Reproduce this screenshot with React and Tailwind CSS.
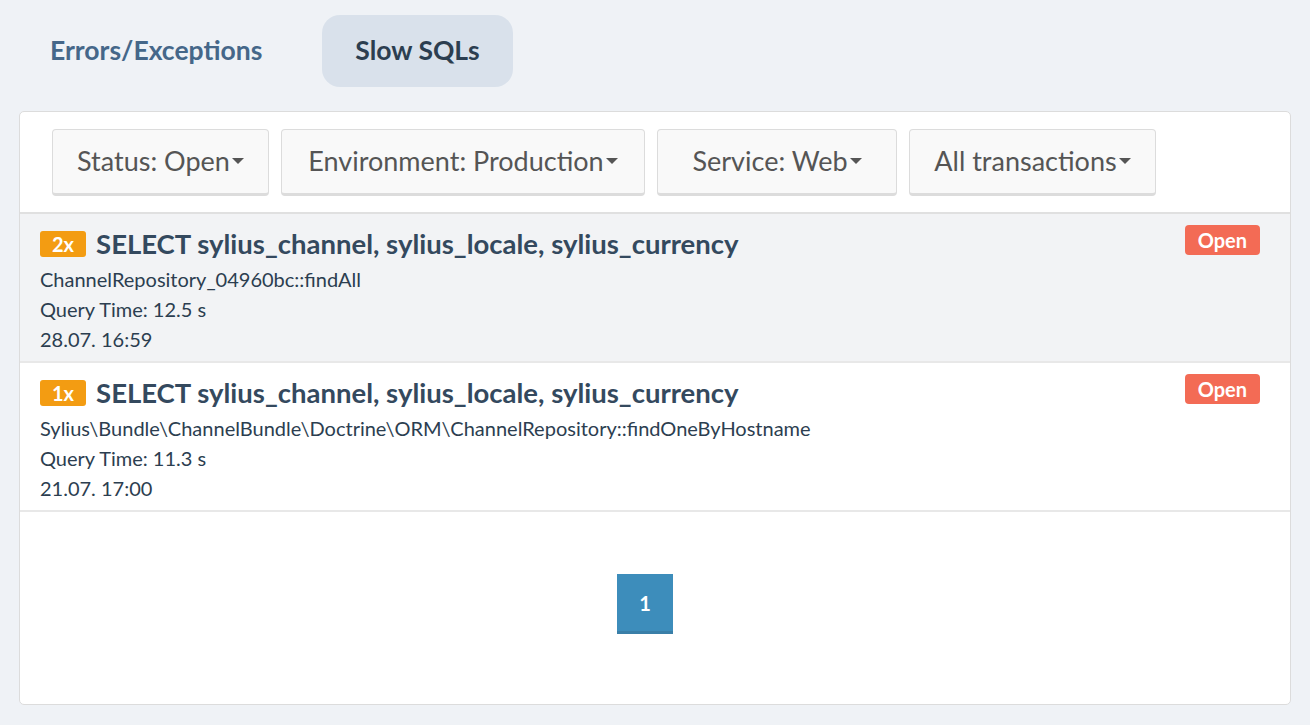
import React from 'react';

const filters = [
  { label: 'Status: Open', w: 'w-[217px]' },
  { label: 'Environment: Production', w: 'w-[364px]' },
  { label: 'Service: Web', w: 'w-[240px]' },
  { label: 'All transactions', w: 'w-[247px]' },
];

const rows = [
  {
    count: '2x',
    title: 'SELECT sylius_channel, sylius_locale, sylius_currency',
    source: 'ChannelRepository_04960bc::findAll',
    time: 'Query Time: 12.5 s',
    date: '28.07. 16:59',
    shaded: true,
  },
  {
    count: '1x',
    title: 'SELECT sylius_channel, sylius_locale, sylius_currency',
    source: 'Sylius\\Bundle\\ChannelBundle\\Doctrine\\ORM\\ChannelRepository::findOneByHostname',
    time: 'Query Time: 11.3 s',
    date: '21.07. 17:00',
    shaded: false,
  },
];

const Caret = () => (
  <span className="inline-block ml-0.5 mb-0.5 w-0 h-0 border-l-[6px] border-r-[6px] border-t-[6px] border-l-transparent border-r-transparent border-t-[#555]" />
);

const App = () => {
  return (
    <div className="min-h-screen bg-[#eff2f6] pt-[15px] px-[19px] pb-5" style={{ fontFamily: 'Lato, "Liberation Sans", sans-serif' }}>
      <div className="flex items-center gap-[60px] pl-[31px] mb-6">
        <span className="text-[26.5px] font-bold text-[#456789]">Errors/Exceptions</span>
        <span className="h-[72px] px-[33px] flex items-center rounded-[18px] bg-[#d9e1eb] text-[26.5px] font-bold text-[#2c3e50]">Slow SQLs</span>
      </div>

      <div className="bg-white border border-[#dcdcdc] rounded-[5px] h-[594px] flex flex-col">
        <div className="flex gap-3 pl-[32px] pt-[17px] pb-[16px] border-b-2 border-[#e0e0e0]">
          {filters.map(f => (
            <button
              key={f.label}
              className={`${f.w} h-[67px] bg-[#f9f9f9] border border-[#dcdcdc] border-b-[3px] rounded-[4px] text-[27px] text-[#555] flex items-center justify-center`}
            >
              {f.label}<Caret />
            </button>
          ))}
        </div>

        {rows.map((r, i) => (
          <div
            key={i}
            className={`flex justify-between pl-5 pr-[30px] pt-4 pb-[7px] border-b-2 border-[#e8e8e8] ${r.shaded ? 'bg-[#f2f3f5]' : 'bg-white'}`}
          >
            <div>
              <div className="flex items-center gap-[10px] h-[28px]">
                <span className="bg-[#f39c12] text-white font-bold text-[20px] h-[26px] px-[12px] rounded-[3px] flex items-center">{r.count}</span>
                <span className="text-[27.5px] font-bold text-[#34495e] leading-[28px]">{r.title}</span>
              </div>
              <div className="text-[20px] text-[#2c3e50] leading-[30px] mt-[6px]">
                <div>{r.source}</div>
                <div>{r.time}</div>
                <div>{r.date}</div>
              </div>
            </div>
            <div>
              <span className="inline-flex -mt-[6px] items-center h-[30px] px-[13px] rounded-[4px] bg-[#f36b55] text-white font-bold text-[20px]">Open</span>
            </div>
          </div>
        ))}

        <div className="flex justify-center pt-[62px] pr-[20px]">
          <span className="w-[56px] h-[60px] bg-[#3d8dbb] border-b-[3px] border-[#3a7fa8] text-white font-bold text-[20px] flex items-center justify-center">1</span>
        </div>
      </div>
    </div>
  );
};

export default App;
